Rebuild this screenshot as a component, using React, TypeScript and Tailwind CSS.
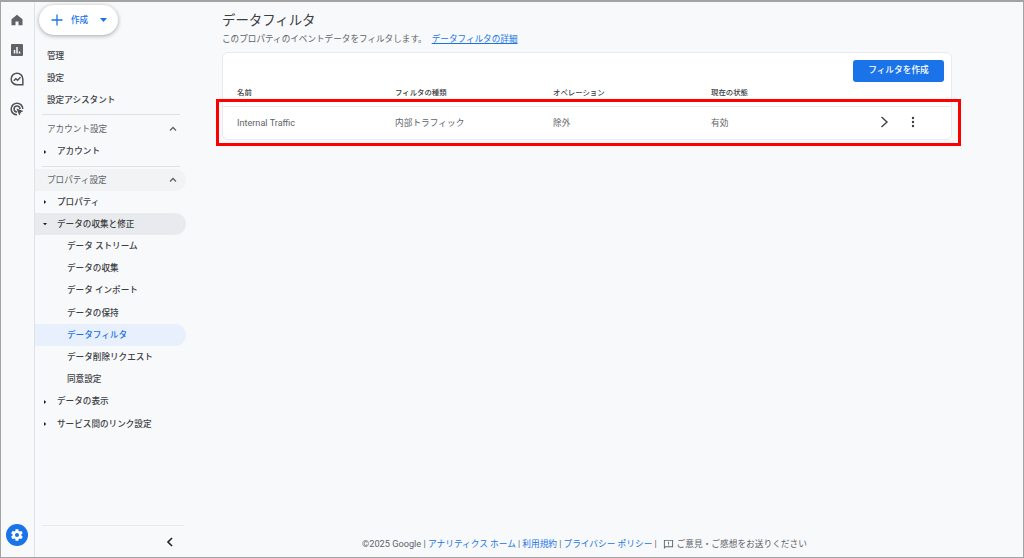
import React from "react";

function Caret({ open }: { open?: boolean }) {
  return (
    <svg width="6" height="6" viewBox="0 0 6 6" className="absolute left-[7px] top-1/2 -translate-y-1/2" fill="#202124">
      {open ? <path d="M1 2 L5 2 L3 4.2 Z" /> : <path d="M2 1 L4.2 3 L2 5 Z" />}
    </svg>
  );
}

function Chevron() {
  return (
    <svg width="10" height="10" viewBox="0 0 10 10" fill="none" stroke="#5f6368" strokeWidth="1.3">
      <path d="M2 6.5 L5 3.5 L8 6.5" />
    </svg>
  );
}

function Item({ label }: { label: string }) {
  return <div className="h-[22.2px] flex items-center pl-[12px] text-[#3c4043]">{label}</div>;
}

function Sub({ label, active }: { label: string; active?: boolean }) {
  return (
    <div className={`h-[22.2px] flex items-center pl-[32px] rounded-r-full w-[151px] ${active ? "bg-[#e8f0fe] text-[#1a73e8]" : "text-[#3c4043]"}`}>
      {label}
    </div>
  );
}

function Tree({ label, open, cls = "" }: { label: string; open?: boolean; cls?: string }) {
  return (
    <div className={`relative h-[22.2px] flex items-center pl-[22px] rounded-r-full w-[151px] text-[#3c4043] ${cls}`}>
      <Caret open={open} />
      {label}
    </div>
  );
}

export default function App() {
  return (
    <div className="relative w-[1024px] h-[558px] overflow-hidden flex bg-[#f8f9fb] border border-[#a3a3a3] border-t-2 text-[8.6px] font-medium font-['Roboto','Noto_Sans_CJK_JP',sans-serif]">
      {/* rail */}
      <div className="w-[34px] shrink-0 border-r border-[#dfe1e5] flex flex-col items-center pt-[12px] pb-[11px] pr-[1px]">
        <svg width="12" height="12" viewBox="0 0 24 24" fill="#5f6368"><path d="M12 1.5 L23 10.5 V22.5 H15 V15 H9 V22.5 H1 V10.5 Z" /></svg>
        <svg className="mt-[18px]" width="12" height="12" viewBox="0 0 24 24" fill="#5f6368">
          <path fillRule="evenodd" d="M2 0h20a2 2 0 0 1 2 2v20a2 2 0 0 1-2 2H2a2 2 0 0 1-2-2V2a2 2 0 0 1 2-2zm3.500 12v7h3v-7zm5-6v13h3V6zm5 9v4h3v-4z" />
        </svg>
        <svg className="mt-[16px]" width="14" height="14" viewBox="0 0 24 24" fill="none" stroke="#4f5357" strokeWidth="2.6">
          <path d="M22 22h-10a10 10 0 1 1 10-10z" />
          <path d="M6.500 15 L10 11.500 L13 14 L18 9" />
        </svg>
        <svg className="mt-[16px]" width="14" height="14" viewBox="0 0 24 24" fill="none" stroke="#4f5357" strokeWidth="2.6">
          <path d="M12 22A10 10 0 1 1 22 12" />
          <path d="M12 17A5 5 0 1 1 17 12" />
          <path d="M11 11 L23 15.500 L18.500 18 L16 23 Z" fill="#4f5357" stroke="none" />
        </svg>
        <div className="mt-auto w-[22px] h-[22px] rounded-full bg-[#1a73e8] flex items-center justify-center">
          <svg width="14" height="14" viewBox="0 0 24 24" fill="#fff">
            <path fillRule="evenodd" d="M19.4 13c.04-.33.06-.66.06-1s-.02-.67-.06-1l2.1-1.65a.5.5 0 0 0 .12-.64l-2-3.46a.5.5 0 0 0-.6-.22l-2.49 1a7.3 7.3 0 0 0-1.73-1l-.38-2.65A.5.5 0 0 0 13.9 2h-4a.5.5 0 0 0-.49.42l-.38 2.65a7.7 7.7 0 0 0-1.73 1l-2.49-1a.5.5 0 0 0-.6.22l-2 3.46a.5.5 0 0 0 .12.64L4.44 11a7.9 7.9 0 0 0 0 2l-2.11 1.65a.5.5 0 0 0-.12.64l2 3.46c.12.22.38.3.6.22l2.49-1c.52.4 1.1.74 1.73 1l.38 2.65c.04.24.25.42.49.42h4c.25 0 .45-.18.49-.42l.38-2.65a7.7 7.7 0 0 0 1.73-1l2.49 1c.23.08.48 0 .6-.22l2-3.46a.5.5 0 0 0-.12-.64zM12 15.500a3.500 3.500 0 1 1 0-7 3.500 3.500 0 0 1 0 7z" />
          </svg>
        </div>
      </div>

      {/* nav */}
      <div className="w-[172px] shrink-0 flex flex-col">
        <div className="ml-[4px] mt-[3px] w-[79px] h-[30px] rounded-full bg-white shadow-[0_1px_4px_rgba(60,64,67,0.45)] flex items-center pl-[12px] text-[#1a73e8]">
          <svg width="12" height="12" viewBox="0 0 12 12" stroke="#1a73e8" strokeWidth="1.3"><path d="M6 .5v11M.5 6h11" /></svg>
          <span className="ml-[8px] text-[8.6px]">作成</span>
          <svg className="ml-[12px]" width="7" height="4" viewBox="0 0 7 4" fill="#1a73e8"><path d="M0 0h7L3.500 4z" /></svg>
        </div>
        <div className="mt-[10px]">
          <Item label="管理" />
          <Item label="設定" />
          <Item label="設定アシスタント" />
        </div>
        <div className="ml-[7px] w-[138px] border-t border-[#dfe1e5] mt-[2px]" />
        <div className="h-[23px] mt-[3px] pl-[12px] pr-[9px] w-[151px] flex items-center justify-between text-[#5f6368] font-normal"><span>アカウント設定</span><span className="mr-[-1px]"><Chevron /></span></div>
        <Tree label="アカウント" />
        <div className="ml-[7px] w-[138px] border-t border-[#dfe1e5] mt-[3px]" />
        <div className="h-[22.2px] mt-[2px] pt-[1px] pl-[12px] pr-[9px] w-[151px] rounded-r-full bg-[#f1f3f4] flex items-center justify-between text-[#5f6368] font-normal"><span>プロパティ設定</span><span className="mr-[-1px]"><Chevron /></span></div>
        <Tree label="プロパティ" />
        <Tree label="データの収集と修正" open cls="bg-[#e8eaed]" />
        <Sub label="データ ストリーム" />
        <Sub label="データの収集" />
        <Sub label="データ インポート" />
        <Sub label="データの保持" />
        <Sub label="データフィルタ" active />
        <Sub label="データ削除リクエスト" />
        <Sub label="同意設定" />
        <Tree label="データの表示" />
        <div className="mt-[0.5px]"><Tree label="サービス間のリンク設定" /></div>
        <div className="mt-auto ml-[7px] w-[142px] border-t border-[#e8eaed] h-[32px] flex items-center justify-end pr-[10px]">
          <svg width="8" height="10" viewBox="0 0 8 10" fill="none" stroke="#202124" strokeWidth="1.6"><path d="M6 1 L2 5 L6 9" /></svg>
        </div>
      </div>

      {/* main */}
      <div className="flex-1 flex flex-col pl-[15px] pr-[71px] min-w-0">
        <h1 className="mt-[9px] text-[13.4px] leading-[20px] font-normal text-[#3c4043]">データフィルタ</h1>
        <p className="mt-[2px] text-[#5f6368] font-normal leading-[13px]">
          このプロパティのイベントデータをフィルタします。
          <a className="text-[#1a73e8] underline ml-[5px]">データフィルタの詳細</a>
        </p>
        <div className="mt-[6px] w-[730px] h-[88px] bg-white rounded-[6px] border border-[#e8eaed] flex flex-col">
          <div className="flex justify-end pt-[7px] pr-[7px]">
            <button className="w-[91px] h-[22px] rounded-[3px] bg-[#1a73e8] text-white text-[8.7px]">フィルタを作成</button>
          </div>
          <div className="grid grid-cols-[158px_158px_158px_1fr] pl-[14px] mt-[5px] h-[12px] items-center text-[7.4px] text-[#3c4043]">
            <span>名前</span><span>フィルタの種類</span><span>オペレーション</span><span>現在の状態</span>
          </div>
          <div className="mt-[7px] pt-[2px] flex-1 border-t border-[#e8eaed] grid grid-cols-[158px_158px_158px_1fr] pl-[14px] items-center text-[8.7px] text-[#5f6368] font-normal">
            <span className="text-[9.1px]">Internal Traffic</span><span>内部トラフィック</span><span>除外</span>
            <div className="flex items-center">
              <span>有効</span>
              <svg className="ml-[152px] -mt-[4px]" width="9" height="12" viewBox="0 0 9 12" fill="none" stroke="#3c4043" strokeWidth="1.4"><path d="M1.500 1 L7 6 L1.500 11" /></svg>
              <svg className="ml-[22px] -mt-[4px]" width="4" height="12" viewBox="0 0 4 12" fill="#3c4043"><circle cx="2" cy="2" r="1.2" /><circle cx="2" cy="6" r="1.2" /><circle cx="2" cy="10" r="1.2" /></svg>
            </div>
          </div>
        </div>
        <div className="mt-auto mb-[6px] flex items-center justify-center pl-[15px] whitespace-nowrap text-[#5f6368] font-normal text-[8.7px] w-[900px] ml-[-95px]">
          <span className="text-[9.2px]">©2025 Google |&nbsp;</span>
          <a className="text-[#1a73e8]">アナリティクス ホーム</a><span>&nbsp;|&nbsp;</span>
          <a className="text-[#1a73e8]">利用規約</a><span>&nbsp;|&nbsp;</span>
          <a className="text-[#1a73e8]">プライバシー ポリシー</a><span>&nbsp;|</span>
          <svg className="ml-[6px] mr-[3px]" width="11" height="11" viewBox="0 0 24 24" fill="#5f6368"><path fillRule="evenodd" d="M2 2h20v16H6l-4 4zm2 2v13l1.2-1H20V4zm7 2h2v5h-2zm0 6h2v2h-2z" /></svg>
          <span>ご意見・ご感想をお送りください</span>
        </div>
      </div>

      {/* red highlight */}
      <div className="absolute left-[215px] top-[97px] w-[745px] h-[47px] border-[3px] border-[#ff0000] pointer-events-none" />
    </div>
  );
}
